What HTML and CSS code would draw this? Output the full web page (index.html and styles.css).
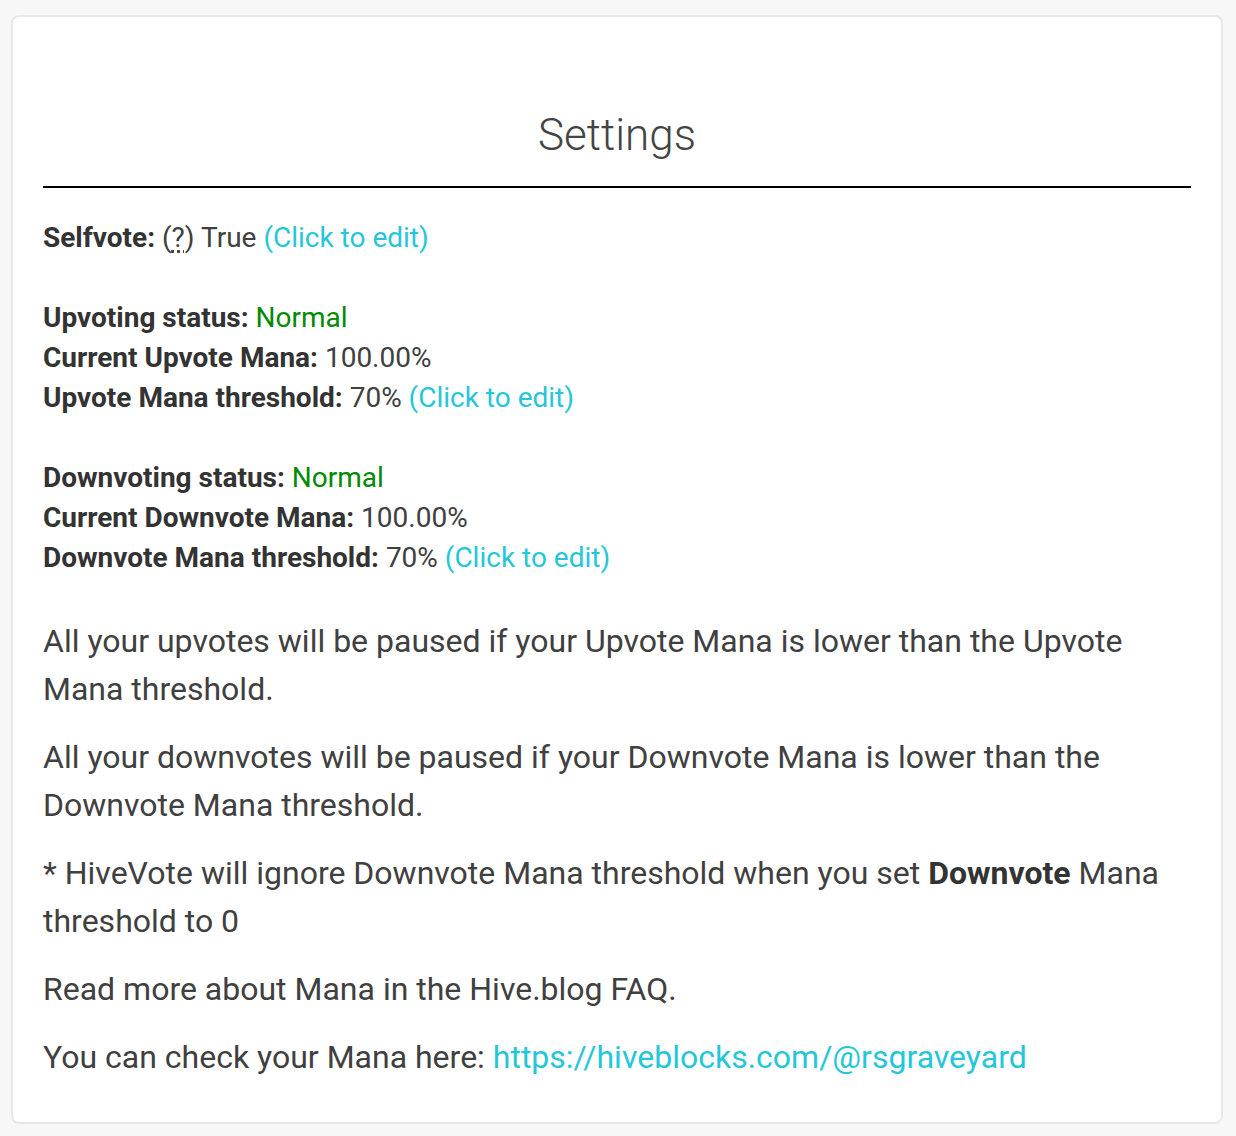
FILE: index.html
```html
<!DOCTYPE html>
<html lang="en">

<head>
    <meta charset="UTF-8">
    <meta name="viewport" content="width=device-width, initial-scale=1.0">
    <title>Settings</title>
    <link rel="stylesheet" href="styles.css">
</head>

<body>

    <div class="card">
        <h1 class="title">Settings</h1>

        <div class="status">
            <b>Selfvote:</b> (<abbr title="Vote your own posts">?</abbr>) True <a href="#" class="edit">(Click to edit)</a><br><br>

            <b>Upvoting status:</b> <span class="ok">Normal</span><br>
            <b>Current Upvote Mana:</b> 100.00%<br>
            <b>Upvote Mana threshold:</b> 70% <a href="#" class="edit">(Click to edit)</a><br><br>

            <b>Downvoting status:</b> <span class="ok">Normal</span><br>
            <b>Current Downvote Mana:</b> 100.00%<br>
            <b>Downvote Mana threshold:</b> 70% <a href="#" class="edit">(Click to edit)</a>
        </div>

        <div class="notes">
            <p>All your upvotes will be paused if your Upvote Mana is lower than the Upvote Mana threshold.</p>
            <p>All your downvotes will be paused if your Downvote Mana is lower than the Downvote Mana threshold.</p>
            <p>* HiveVote will ignore Downvote Mana threshold when you set <b>Downvote</b> Mana threshold to 0</p>
            <p>Read more about Mana in the Hive.blog FAQ.</p>
            <p>You can check your Mana here: <a href="#">https://hiveblocks.com/@rsgraveyard</a></p>
        </div>
    </div>

</body>

</html>
```

FILE: styles.css
```css
* {
    margin: 0;
    padding: 0;
    box-sizing: border-box;
}

body {
    font-family: Roboto, "Liberation Sans", sans-serif;
    background-color: #f7f7f7;
    color: #404040;
    padding: 15px 13px 0 11px;
}

.card {
    background-color: #fff;
    border: 2px solid #e8e8e8;
    border-radius: 8px;
    padding: 93px 30px 41px 30px;
}

.title {
    font-size: 44px;
    font-weight: 300;
    line-height: 50px;
    text-align: center;
    color: #444;
    padding-bottom: 26px;
    border-bottom: 2px solid #000;
    margin-bottom: 30px;
}

.status {
    font-size: 28px;
    line-height: 40px;
    margin-bottom: 39px;
}

.status b {
    color: #333;
}

abbr {
    text-decoration: underline dotted;
    text-underline-offset: 3px;
    cursor: help;
}

.ok {
    color: #008a00;
}

a {
    color: #26c6da;
    text-decoration: none;
}

.notes p {
    font-size: 32px;
    line-height: 48px;
    margin-bottom: 20px;
}

.notes p:last-child {
    margin-bottom: 0;
}

.notes b {
    color: #333;
}
```
